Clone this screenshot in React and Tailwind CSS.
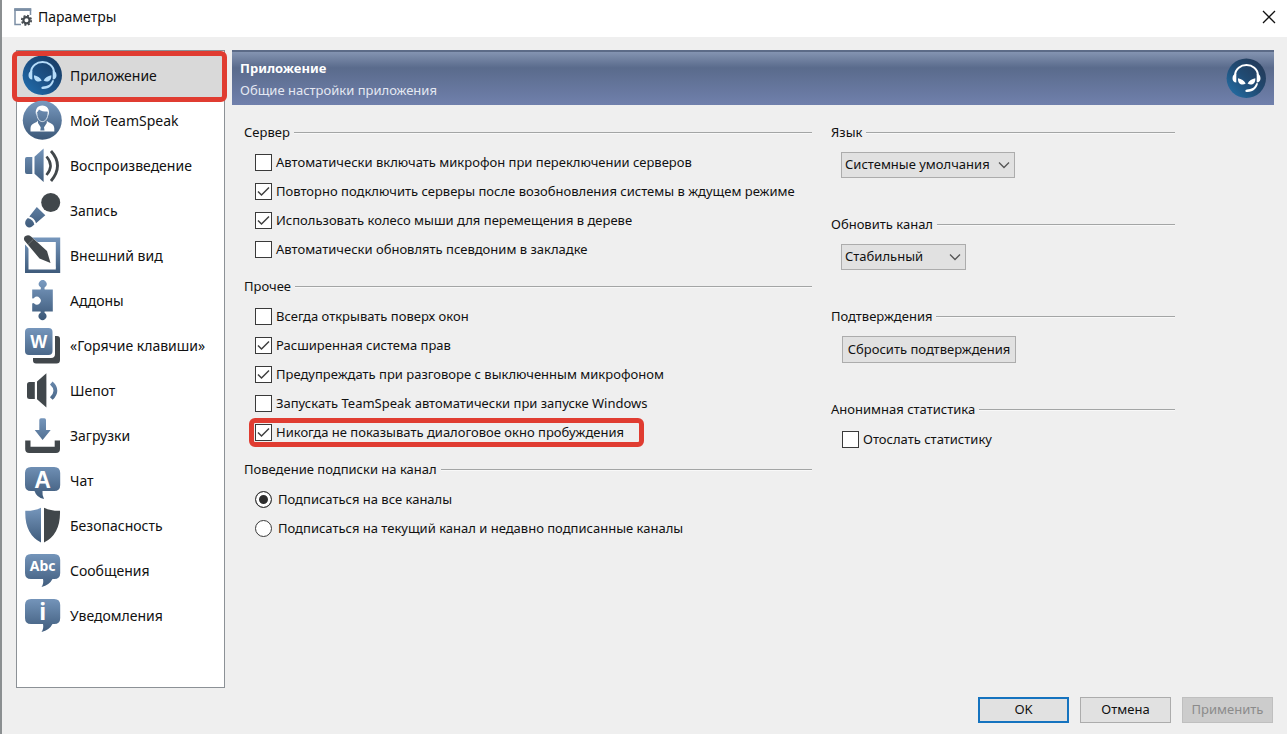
import React from "react";

function Gradients() {
  return (
    <svg width="0" height="0" className="absolute" aria-hidden="true">
      <defs>
        <linearGradient id="steel" x1="0" y1="0" x2="0" y2="40" gradientUnits="userSpaceOnUse">
          <stop offset="0" stopColor="#7a9bc1" />
          <stop offset="1" stopColor="#3b5777" />
        </linearGradient>
        <linearGradient id="disc" x1="0" y1="1" x2="1" y2="0">
          <stop offset="0" stopColor="#2273b4" />
          <stop offset="0.45" stopColor="#1c5288" />
          <stop offset="1" stopColor="#17375c" />
        </linearGradient>
        <linearGradient id="discDark" x1="0" y1="1" x2="1" y2="0">
          <stop offset="0" stopColor="#2474ad" />
          <stop offset="0.5" stopColor="#204a72" />
          <stop offset="1" stopColor="#253652" />
        </linearGradient>
      </defs>
    </svg>
  );
}

const STEEL = "url(#steel)";
const DARK = "#41474b";

function Icon({ children }) {
  return (
    <svg viewBox="0 0 40 41" className="h-[41px] w-10 shrink-0" aria-hidden="true">
      {children}
    </svg>
  );
}

function HeadsetIcon({ disc = "url(#disc)", color = "#b5dcfa" }) {
  return (
    <Icon>
      <circle cx="20.3" cy="20.3" r="19.7" fill={disc} />
      <path d="M9 17.500C9.500 3.600 31.500 3.600 32 17.500" fill="none" stroke={color} strokeWidth="2" />
      <path d="M10.300 15.800v8.800C7.800 24.600 6.500 22.800 6.500 20.300s1.400-4.400 3.800-4.500ZM30.700 15.800v8.800c2.500 0 3.800-1.800 3.800-4.300s-1.400-4.400-3.800-4.500Z" fill={color} />
      <path d="M12 20.200c3.400.6 6.100 2.300 7.700 5.200-2.800 2.200-8.300 1.300-7.700-5.200ZM29.300 20.200c-3.400.6-6.100 2.300-7.700 5.200 2.800 2.200 8.300 1.300 7.700-5.200Z" fill={color} />
      <path d="M32 25.200c-.8 4.800-4.400 8.400-10.700 8.900-2.400.1-2.600-2.500-.4-2.700 4.600-.2 7.900-1.700 9.300-6.200Z" fill={color} />
    </Icon>
  );
}

function UserIcon() {
  return (
    <Icon>
      <circle cx="20.300" cy="20.300" r="19.500" fill={STEEL} />
      <path d="M14.300 15.500c-1.900-6 1.300-10 6-10 4.800 0 8 4 6.200 10l-1-4c-3.500 0-6.500-.4-8.500-2.100-.6 1.500-2 2.600-2.200 3.200Z" fill="#fff" />
      <path d="M14.800 13c.2 5.500 2.700 8.600 5.600 8.600s5.400-3.100 5.700-8.600" fill="none" stroke="#dfe8f1" strokeWidth="1" />
      <path d="M16 20.500v2.600l4.400 6.600 4.400-6.600v-2.600c1.500 3 7.500 2.300 7.500 8v3H8.500v-3c0-5.700 6-5 7.500-8Z" fill="#fff" />
      <path d="M19.200 24.500h2.400l.9 6h-4.200Z" fill="#54769b" />
    </Icon>
  );
}

function PlaybackIcon() {
  return (
    <Icon>
      <path d="M4.800 12H10.300V29H4.800Q3 29 3 27V14Q3 12 4.800 12Z" fill={STEEL} />
      <path d="M12.500 11.800 21.600 3.500V37L12.500 28.800Z" fill={STEEL} />
      <path d="M24.500 11.500Q32.500 20.500 24.500 30" fill="none" stroke={DARK} strokeWidth="2.600" />
      <path d="M29 6Q42 20.500 29 36" fill="none" stroke={DARK} strokeWidth="2.800" />
    </Icon>
  );
}

function MicIcon() {
  return (
    <Icon>
      <circle cx="28.700" cy="12.500" r="9.500" fill={DARK} />
      <path d="M14.800 17 23.300 25.200 14 33.200Q12.800 28.300 7.300 26.500Z" fill={STEEL} />
      <path d="M5.800 28Q11.500 29.500 12.300 34.500L10 36.600Q7 38.800 4.500 36.200 2 33.500 4 30Z" fill={STEEL} />
    </Icon>
  );
}

function AppearanceIcon() {
  return (
    <Icon>
      <path d="M3 2.500H38.200V38H3ZM6.500 7V34.500H33.800V7Z" fillRule="evenodd" fill={STEEL} />
      <path d="M3.500 5.500 6 3 24 17.500 28 27 18.500 22.500Z" fill="#fff" stroke="#fff" strokeWidth="6" />
      <path d="M2.400 5.500Q1 2 4 .800 6.500-.500 9 1.500L25 16 28.500 28 17.500 23.500Z" fill={DARK} />
      <path d="M6 9.500 11.500 4.200" stroke="#7e8487" strokeWidth=".7" />
    </Icon>
  );
}

function AddonIcon() {
  return (
    <Icon>
      <path d="M10.200 9.500H18.500Q19.500 7.500 18 6.800A3.900 3.900 0 1 1 23.400 6.800Q22 7.500 22.700 9.500H30.800V31.500H22.700Q22 33 23.500 33.600A3.900 3.900 0 1 1 17.500 33.600Q19.200 33 18.500 31.500H10.200V23.400Q11.500 22.500 12.200 23.600A3.900 3.900 0 1 0 12.200 17.800Q11.500 19 10.200 18.200Z" fill={STEEL} />
    </Icon>
  );
}

function HotkeyIcon() {
  return (
    <Icon>
      <path d="M33 11H35Q38 11 38 14V35Q38 38.500 34.500 38.500H14Q11 38.500 11 35.500V33H29Q33 33 33 29Z" fill={DARK} />
      <rect x="3" y="3" width="27.500" height="27" rx="4" fill={STEEL} />
      <text x="16.700" y="22.800" textAnchor="middle" fill="#fff" fontSize="18" fontWeight="700" fontFamily="Liberation Sans, sans-serif">W</text>
    </Icon>
  );
}

function WhisperIcon() {
  return (
    <Icon>
      <path d="M7.500 12H12.800V29H7.500Q5 29 5 26.500V14.500Q5 12 7.500 12Z" fill={DARK} />
      <path d="M15 11.500 24.400 3.200V37.500L15 29.200Z" fill={DARK} />
      <path d="M29.300 13Q37.500 20.500 29.300 28.500" fill="none" stroke={STEEL} strokeWidth="3.800" />
    </Icon>
  );
}

function DownloadIcon() {
  return (
    <Icon>
      <path d="M17.300 5Q17.300 3.200 19 3.200H22.300Q24 3.200 24 5V15H28.700L20.600 25 12.700 15H17.300Z" fill={STEEL} />
      <path d="M3.200 25.500H8.500V31.800H32.700V25.500H38V34Q38 38 34 38H7.200Q3.200 38 3.200 34Z" fill={DARK} />
    </Icon>
  );
}

function ChatIcon() {
  return (
    <Icon>
      <path d="M9 7H32.200Q38.200 7 38.200 13V25Q38.200 31 32.200 31H20.500Q20 35 22 39 14.500 37.500 12.500 31H9Q3 31 3 25V13Q3 7 9 7Z" fill={STEEL} />
      <text x="20.500" y="27.500" textAnchor="middle" fill="#fff" fontSize="23" fontWeight="700" fontFamily="Liberation Sans, sans-serif">A</text>
    </Icon>
  );
}

function ShieldIcon() {
  return (
    <Icon>
      <path d="M3.300 5.800Q13 6 19 2.800V37.500Q2.500 29 3.300 5.800Z" fill={STEEL} />
      <path d="M38 5.800Q28.500 6 22 2.800V37.500Q38.700 29 38 5.800Z" fill={DARK} />
    </Icon>
  );
}

function BubbleIcon({ label, size, y }) {
  return (
    <Icon>
      <path d="M9 4H32.200Q38.200 4 38.200 10V23Q38.200 29 32.200 29H30.500Q27.500 35 19.500 37 22 33.500 21 29H9Q3 29 3 23V10Q3 4 9 4Z" fill={STEEL} />
      <text x="20.600" y={y} textAnchor="middle" fill="#fff" fontSize={size} fontWeight="700" fontFamily="Noto Sans, sans-serif">{label}</text>
    </Icon>
  );
}

const NAV = [
  ["Приложение", <HeadsetIcon />],
  ["Мой TeamSpeak", <UserIcon />],
  ["Воспроизведение", <PlaybackIcon />],
  ["Запись", <MicIcon />],
  ["Внешний вид", <AppearanceIcon />],
  ["Аддоны", <AddonIcon />],
  ["«Горячие клавиши»", <HotkeyIcon />],
  ["Шепот", <WhisperIcon />],
  ["Загрузки", <DownloadIcon />],
  ["Чат", <ChatIcon />],
  ["Безопасность", <ShieldIcon />],
  ["Сообщения", <BubbleIcon label="Abc" size={14} y={21} />],
  ["Уведомления", <BubbleIcon label="i" size={23} y={25} />],
];

function Highlight({ className }) {
  return <span className={`pointer-events-none absolute rounded-md border-[5px] border-[#e03c31] ${className}`} />;
}

function Group({ title, children }) {
  return (
    <section>
      <h2 className="flex h-5 items-center gap-1">
        {title}
        <span className="h-[2px] flex-1 border-t border-[#a3a5a5] bg-[#f8f8f8]" />
      </h2>
      {children}
    </section>
  );
}

function Check({ label, checked, highlighted }) {
  return (
    <div className="flex h-[29px] items-center">
      <label className="relative flex items-center gap-1 pl-[11px]">
        <span className="grid">
          <input
            type="checkbox"
            defaultChecked={checked}
            className="peer col-start-1 row-start-1 size-[17px] appearance-none border border-[#3a3a3a] bg-white"
          />
          <svg viewBox="0 0 17 17" className="pointer-events-none invisible col-start-1 row-start-1 size-[17px] peer-checked:visible" aria-hidden="true">
            <path d="M3 8.500 6.500 12 14 4.500" fill="none" stroke="#3f3f3f" strokeWidth="1.500" />
          </svg>
        </span>
        {label}
        {highlighted && <Highlight className="-top-[5px] -right-5 -bottom-[5px] left-[5px]" />}
      </label>
    </div>
  );
}

function Radio({ label, checked }) {
  return (
    <label className="flex h-[29px] items-center gap-[6px] pl-[11px]">
      <input
        type="radio"
        name="subscription"
        defaultChecked={checked}
        className="size-[17px] appearance-none rounded-full border border-[#3a3a3a] bg-white checked:bg-[#2e2e2e] checked:shadow-[inset_0_0_0_3px_#ffffff]"
      />
      {label}
    </label>
  );
}

function Select({ label, value, className }) {
  return (
    <div className="mt-[9px] ml-[10px] grid w-fit items-center">
      <select
        aria-label={label}
        className={`col-start-1 row-start-1 h-[26px] appearance-none border border-[#acacac] bg-[#e1e1e1] pl-[3px] ${className}`}
      >
        <option>{value}</option>
      </select>
      <svg viewBox="0 0 12 8" className="pointer-events-none col-start-1 row-start-1 mr-[5px] h-2 w-3 justify-self-end" aria-hidden="true">
        <path d="M1 1.500 6 6.500 11 1.500" fill="none" stroke="#555" strokeWidth="1.300" />
      </svg>
    </div>
  );
}

function TitleBar() {
  return (
    <header className="flex h-[37px] items-center bg-white pr-[10px] pb-[3px] pl-[11px] font-['Noto_Sans','Open_Sans',sans-serif] text-sm">
      <svg viewBox="0 0 20 20" className="size-5 shrink-0" aria-hidden="true">
        <path d="M8 17.500H2V2H17.500V8" fill="none" stroke="#7c8fa5" strokeWidth="1.500" />
        <path d="M1.300 2.700H18.200" stroke="#7c8fa5" strokeWidth="2.600" />
        <circle cx="13.500" cy="13.300" r="3.100" fill="none" stroke="#454b50" strokeWidth="2.200" />
        <circle cx="13.500" cy="13.300" r="4.700" fill="none" stroke="#454b50" strokeWidth="1.700" strokeDasharray="2 1.690" />
      </svg>
      <h1 className="ml-[5px] flex-1">Параметры</h1>
      <button type="button" aria-label="Закрыть" className="flex size-4 items-center justify-center">
        <svg viewBox="0 0 14 14" className="size-[14px]" aria-hidden="true">
          <path d="M1 1 13 13M13 1 1 13" stroke="#111" strokeWidth="1.300" />
        </svg>
      </button>
    </header>
  );
}

export default function App() {
  return (
    <div className="flex min-h-screen flex-col border-l-2 border-[#8b8f91] bg-[#efefef] font-['Noto_Sans','Open_Sans',sans-serif] text-[13px] text-[#111]">
      <Gradients />
      <TitleBar />
      <main className="flex flex-1 gap-[7px] pt-[13px] pr-[13px] pl-[14px]">
        <nav className="w-[209px] shrink-0 border border-[#8c9196] bg-white pt-[2px] text-sm">
          <ul>
            {NAV.map(([label, icon], i) => (
              <li key={label} className="relative">
                <a
                  href="#"
                  aria-current={i === 0 ? "page" : undefined}
                  className="flex h-[45px] items-center gap-2 pl-[5px] aria-[current=page]:bg-[#d9d9d9]"
                >
                  {icon}
                  {label}
                </a>
                {i === 0 && <Highlight className="-top-[2px] -right-[3px] -bottom-1 -left-[5px]" />}
              </li>
            ))}
          </ul>
        </nav>
        <div className="min-w-0 flex-1">
          <div className="flex h-[55px] items-center border-t-2 border-[#5c6b87] bg-linear-to-b from-[#8494b1] via-[#5a6b8c] via-30% to-[#7080ac] pr-2 pl-2 text-white">
            <div className="flex-1 leading-[22px]">
              <p className="font-bold">Приложение</p>
              <p className="text-[#e4e8f2]">Общие настройки приложения</p>
            </div>
            <HeadsetIcon disc="url(#discDark)" color="#ffffff" />
          </div>
          <form className="flex gap-[19px] pt-[18px] pr-[99px] pl-3">
            <div className="flex flex-[568] flex-col gap-[13px]">
              <Group title="Сервер">
                <div className="pt-[5px]">
                  <Check label="Автоматически включать микрофон при переключении серверов" />
                  <Check label="Повторно подключить серверы после возобновления системы в ждущем режиме" checked />
                  <Check label="Использовать колесо мыши для перемещения в дереве" checked />
                  <Check label="Автоматически обновлять псевдоним в закладке" />
                </div>
              </Group>
              <Group title="Прочее">
                <div className="pt-[5px]">
                  <Check label="Всегда открывать поверх окон" />
                  <Check label="Расширенная система прав" checked />
                  <Check label="Предупреждать при разговоре с выключенным микрофоном" checked />
                  <Check label="Запускать TeamSpeak автоматически при запуске Windows" />
                  <Check label="Никогда не показывать диалоговое окно пробуждения" checked highlighted />
                </div>
              </Group>
              <Group title="Поведение подписки на канал">
                <div className="pt-[5px]">
                  <Radio label="Подписаться на все каналы" checked />
                  <Radio label="Подписаться на текущий канал и недавно подписанные каналы" />
                </div>
              </Group>
            </div>
            <div className="flex flex-[344] flex-col gap-[37px]">
              <Group title="Язык">
                <Select label="Язык" value="Системные умолчания" className="w-[174px]" />
              </Group>
              <Group title="Обновить канал">
                <Select label="Обновить канал" value="Стабильный" className="w-[125px]" />
              </Group>
              <Group title="Подтверждения">
                <button type="button" className="mt-[9px] ml-[11px] block h-[27px] w-[174px] border border-[#acacac] bg-[#e1e1e1] whitespace-nowrap">
                  Сбросить подтверждения
                </button>
              </Group>
              <Group title="Анонимная статистика">
                <div className="pt-[5px]">
                  <Check label="Отослать статистику" />
                </div>
              </Group>
            </div>
          </form>
        </div>
      </main>
      <footer className="flex justify-end gap-[11px] pt-[9px] pr-[14px] pb-[11px]">
        <button type="button" className="h-[26px] w-[91px] border-2 border-[#1573bf] bg-[#e1e1e1]">OK</button>
        <button type="button" className="h-[26px] w-[91px] border border-[#acacac] bg-[#e1e1e1]">Отмена</button>
        <button type="button" disabled className="h-[26px] w-[91px] border border-[#bfbfbf] bg-[#cccccc] text-[#8b8b8b]">Применить</button>
      </footer>
    </div>
  );
}
